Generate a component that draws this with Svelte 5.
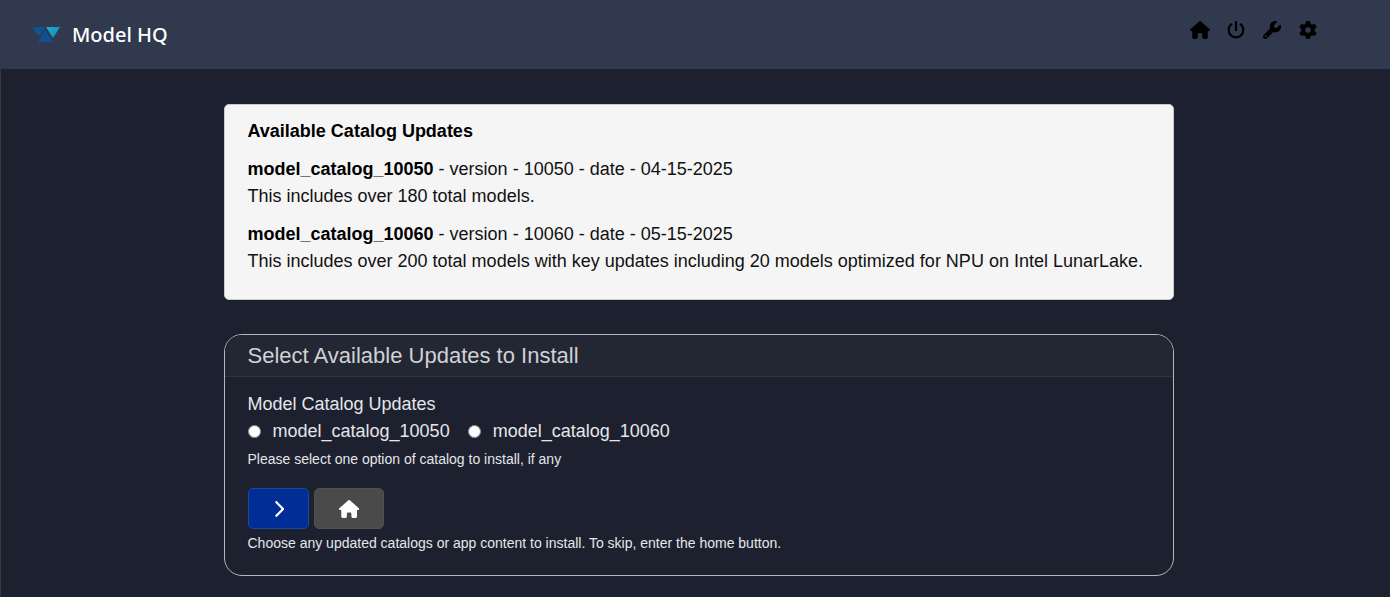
<script>
  const icons = {
    home: {
      box: '0 0 576 512',
      d: 'M575.8 255.5c0 18-15 32.1-32 32.1h-32l.7 160.2c0 2.7-.2 5.4-.5 8.1V472c0 22.1-17.9 40-40 40H456c-1.1 0-2.2 0-3.3-.1c-1.4 .1-2.8 .1-4.2 .1H416 392c-22.1 0-40-17.9-40-40V448 384c0-17.7-14.3-32-32-32H256c-17.7 0-32 14.3-32 32v64 24c0 22.1-17.9 40-40 40H160 128.1c-1.5 0-3-.1-4.5-.2c-1.2 .1-2.4 .2-3.6 .2H104c-22.1 0-40-17.9-40-40V360c0-.9 0-1.9 .1-2.8V287.6H32c-18 0-32-14-32-32.1c0-9 3-17 10-24L266.4 8c7-7 15-8 22-8s15 2 21 7L564.8 231.5c8 7 12 15 11 24z'
    },
    power: {
      box: '0 0 512 512',
      d: 'M288 32c0-17.7-14.3-32-32-32s-32 14.3-32 32V256c0 17.7 14.3 32 32 32s32-14.3 32-32V32zM143.5 120.6c13.6-11.3 15.4-31.5 4.1-45.1s-31.5-15.4-45.1-4.1C49.7 115.4 16 181.8 16 256c0 132.5 107.5 240 240 240s240-107.5 240-240c0-74.2-33.8-140.6-86.6-184.6c-13.6-11.3-33.8-9.4-45.1 4.1s-9.4 33.8 4.1 45.1c38.9 32.3 63.5 81 63.5 135.4c0 97.2-78.8 176-176 176s-176-78.8-176-176c0-54.4 24.7-103.1 63.5-135.4z'
    },
    wrench: {
      box: '0 0 512 512',
      d: 'M352 320c88.4 0 160-71.6 160-160c0-15.3-2.2-30.1-6.2-44.2c-3.1-10.8-16.4-13.2-24.3-5.3l-76.8 76.8c-3 3-7.1 4.7-11.3 4.7H336c-8.8 0-16-7.2-16-16V118.6c0-4.2 1.7-8.3 4.7-11.3l76.8-76.8c7.9-7.9 5.4-21.2-5.3-24.3C382.1 2.2 367.3 0 352 0C263.6 0 192 71.6 192 160c0 19.1 3.4 37.5 9.5 54.5L19.9 396.1C7.2 408.8 0 426.1 0 444.1C0 481.6 30.4 512 67.9 512c18 0 35.3-7.2 48-19.9L297.5 310.5c17 6.2 35.4 9.5 54.5 9.5zM80 408a24 24 0 1 1 0 48 24 24 0 1 1 0-48z'
    },
    gear: {
      box: '0 0 512 512',
      d: 'M495.9 166.6c3.2 8.7 .5 18.4-6.4 24.6l-43.3 39.4c1.1 8.3 1.7 16.8 1.7 25.4s-.6 17.1-1.7 25.4l43.3 39.4c6.9 6.2 9.6 15.9 6.4 24.6c-4.4 11.9-9.7 23.3-15.8 34.3l-4.7 8.1c-6.6 11-14 21.4-22.1 31.2c-5.9 7.2-15.7 9.6-24.5 6.8l-55.7-17.7c-13.4 10.3-28.2 18.9-44 25.4l-12.5 57.1c-2 9.1-9 16.3-18.2 17.8c-13.8 2.3-28 3.5-42.5 3.5s-28.7-1.2-42.5-3.5c-9.2-1.5-16.2-8.7-18.2-17.8l-12.5-57.1c-15.8-6.5-30.6-15.1-44-25.4L83.1 425.9c-8.8 2.8-18.6 .3-24.5-6.8c-8.1-9.8-15.5-20.2-22.1-31.2l-4.7-8.1c-6.1-11-11.4-22.4-15.8-34.3c-3.2-8.7-.5-18.4 6.4-24.6l43.3-39.4C64.6 273.1 64 264.6 64 256s.6-17.1 1.7-25.4L22.4 191.2c-6.9-6.2-9.6-15.9-6.4-24.6c4.4-11.9 9.7-23.3 15.8-34.3l4.7-8.1c6.6-11 14-21.4 22.1-31.2c5.9-7.2 15.7-9.6 24.5-6.8l55.7 17.7c13.4-10.3 28.2-18.9 44-25.4l12.5-57.1c2-9.1 9-16.3 18.2-17.8C227.3 1.2 241.5 0 256 0s28.7 1.2 42.5 3.5c9.2 1.5 16.2 8.7 18.2 17.8l12.5 57.1c15.8 6.5 30.6 15.1 44 25.4l55.7-17.7c8.8-2.8 18.6-.3 24.5 6.8c8.1 9.8 15.5 20.2 22.1 31.2l4.7 8.1c6.1 11 11.4 22.4 15.8 34.3zM256 336a80 80 0 1 0 0-160 80 80 0 1 0 0 160z'
    },
    next: {
      box: '0 0 320 512',
      d: 'M310.6 233.4c12.5 12.5 12.5 32.8 0 45.3l-192 192c-12.5 12.5-32.8 12.5-45.3 0s-12.5-32.8 0-45.3L242.7 256 73.4 86.6c-12.5-12.5-12.5-32.8 0-45.3s32.8-12.5 45.3 0l192 192z'
    }
  };

  const links = [
    { icon: 'home', label: 'Home' },
    { icon: 'power', label: 'Power' },
    { icon: 'wrench', label: 'Tools' },
    { icon: 'gear', label: 'Settings' }
  ];

  const catalogs = [
    {
      name: 'model_catalog_10050',
      version: '10050',
      date: '04-15-2025',
      note: 'This includes over 180 total models.'
    },
    {
      name: 'model_catalog_10060',
      version: '10060',
      date: '05-15-2025',
      note: 'This includes over 200 total models with key updates including 20 models optimized for NPU on Intel LunarLake.'
    }
  ];

  let selected = $state(null);
</script>

{#snippet glyph(name)}
  <svg class="glyph" viewBox={icons[name].box} aria-hidden="true"><path d={icons[name].d} /></svg>
{/snippet}

<div class="page">
  <header>
    <a class="brand" href="#home">
      <svg class="logo" viewBox="0 0 30 17" aria-hidden="true">
        <defs>
          <linearGradient id="deep" x1="0" y1="0" x2="1" y2="1">
            <stop offset="0" stop-color="#124a80" />
            <stop offset="1" stop-color="#0760a4" />
          </linearGradient>
          <linearGradient id="aqua" x1="0" y1="0" x2="1" y2="1">
            <stop offset="0" stop-color="#12b2cb" />
            <stop offset="1" stop-color="#1689b8" />
          </linearGradient>
        </defs>
        <path d="M0 1H14L8 10Z" fill="url(#deep)" />
        <path d="M14 3L22 16H7Z" fill="#10508e" />
        <path d="M15 1H29L22 12Z" fill="url(#aqua)" />
      </svg>
      <span>Model HQ</span>
    </a>
    <nav aria-label="Main">
      {#each links as link}
        <a href={`#${link.icon}`} aria-label={link.label}>{@render glyph(link.icon)}</a>
      {/each}
    </nav>
  </header>

  <main>
    <section class="notice">
      <h2>Available Catalog Updates</h2>
      {#each catalogs as c}
        <p><strong>{c.name}</strong> - version - {c.version} - date - {c.date}<br />{c.note}</p>
      {/each}
    </section>

    <form class="panel" onsubmit={(e) => e.preventDefault()}>
      <h1>Select Available Updates to Install</h1>
      <div class="body">
        <fieldset>
          <legend>Model Catalog Updates</legend>
          <div class="options">
            {#each catalogs as c}
              <label>
                <input type="radio" name="catalog" value={c.name} bind:group={selected} />
                <span>{c.name}</span>
              </label>
            {/each}
          </div>
        </fieldset>
        <p class="hint">Please select one option of catalog to install, if any</p>
        <div class="actions">
          <button class="primary" type="submit" aria-label="Continue">{@render glyph('next')}</button>
          <button type="button" aria-label="Home">{@render glyph('home')}</button>
        </div>
        <p class="hint">Choose any updated catalogs or app content to install. To skip, enter the home button.</p>
      </div>
    </form>
  </main>
</div>

<style>
  :global(body) {
    background: #1d202e;
  }

  .page {
    box-sizing: border-box;
    min-height: 100vh;
    border-left: 1px solid #363a40;
    color: #e4e6ea;
    font: 18px/27px 'Liberation Sans', Arial, sans-serif;
  }

  header {
    display: flex;
    justify-content: space-between;
    align-items: flex-start;
    padding: 21px 72px 21px 30px;
    background: #30394d;
  }

  .brand {
    display: flex;
    align-items: center;
    gap: 11px;
    color: #fff;
    font: 500 20px/27px 'Noto Sans', 'Open Sans', sans-serif;
    text-decoration: none;
  }

  .logo {
    width: 30px;
    height: 17px;
  }

  nav {
    display: flex;
    gap: 16px;
  }

  nav a {
    display: flex;
    width: 20px;
    justify-content: center;
    color: #000;
  }

  .glyph {
    height: 18px;
    fill: currentColor;
  }

  main {
    max-width: 950px;
    margin: 0 auto;
    padding: 35px 0 20px 6px;
  }

  .notice {
    padding: 13px 23px 24px;
    border: 1px solid #c9cbd0;
    border-radius: 5px;
    background: #f5f5f5;
    color: #111;
  }

  h2 {
    margin: 0;
    color: #000;
    font-size: 18px;
  }

  .notice p {
    margin: 11px 0 0;
  }

  strong {
    color: #000;
  }

  .panel {
    margin-top: 34px;
    border: 1px solid #b4b7be;
    border-radius: 18px;
    overflow: hidden;
  }

  h1 {
    margin: 0;
    padding: 7px 23px;
    border-bottom: 1px solid #30333f;
    background: #232733;
    color: #cfd1d5;
    font-size: 22px;
    font-weight: 400;
    line-height: 27px;
  }

  .body {
    padding: 14px 23px 21px;
  }

  fieldset {
    margin: 0;
    padding: 0;
    border: 0;
  }

  legend {
    padding: 0;
  }

  .options {
    display: flex;
    flex-wrap: wrap;
    gap: 18px;
  }

  label {
    display: flex;
    align-items: center;
    gap: 12px;
  }

  input {
    width: 13px;
    height: 13px;
    margin: 0;
  }

  .hint {
    margin: 3px 0 0;
    font-size: 14px;
    line-height: 22px;
  }

  .actions {
    display: flex;
    gap: 5px;
    margin-top: 18px;
  }

  button {
    display: flex;
    align-items: center;
    justify-content: center;
    height: 41px;
    padding: 0 24px;
    border: 1px solid #505050;
    border-radius: 5px;
    background: #4a4a4a;
    color: #fff;
  }

  .primary {
    border-color: #1c4a94;
    background: #002d96;
  }
</style>
